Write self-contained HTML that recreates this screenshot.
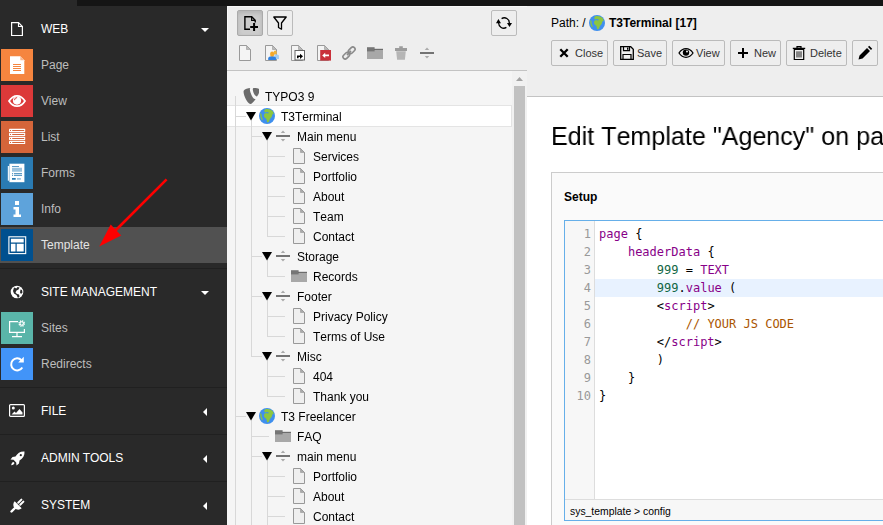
<!DOCTYPE html>
<html><head><meta charset="utf-8"><title>TYPO3 Template</title>
<style>
*{box-sizing:border-box;margin:0;padding:0}
html,body{width:883px;height:525px;overflow:hidden;background:#fff}
body{position:relative;font-family:"Liberation Sans",sans-serif;font-size:12px;color:#000}
.abs,#side,#tree,#doc,#content{position:absolute}
#top{position:absolute;left:77px;top:0;width:806px;height:6px;background:#151515}
#side{left:0;top:0;width:227px;height:525px;background:#292929;overflow:hidden}
#side .top0{position:absolute;left:77px;top:0;right:0;height:6px;background:#151515}
.gh{position:absolute;left:41px;color:#fff;font-size:12px;line-height:14px;white-space:nowrap}
.mi{position:absolute;left:1px;width:32px;height:32px}
.ml{position:absolute;left:41px;color:#bdbdbd;font-size:12px;line-height:14px;white-space:nowrap}
.sep{position:absolute;left:0;width:227px;height:1px;background:#202020}
.act{position:absolute;left:0;top:227px;width:227px;height:36px;background:#515151}
.gi{position:absolute}
#tree{left:227px;top:6px;width:300px;height:519px;background:#f5f5f5;overflow:hidden}
#tbar{position:absolute;left:227px;top:6px;width:300px;height:64px;background:#eee;box-shadow:inset 1px 1px 0 #f8f8f8}
#tbarb{position:absolute;left:227px;top:70px;width:300px;height:1px;background:#c3c3c3}
.btn{position:absolute;height:26px;border:1px solid #bbb;border-radius:2px;background:#eee;font-size:11px;color:#333;line-height:24px;white-space:nowrap}
.btn.on{background:#ccc;border-color:#aaa;box-shadow:inset 0 2px 4px rgba(0,0,0,.12)}
.btn svg{position:absolute}
.btn span{position:absolute;top:0}
.ln{position:absolute;background:#d8d8d8;display:block}
.ti{position:absolute;display:block}
.tt{position:absolute;font-kerning:none;will-change:transform;font-size:12px;line-height:20px;white-space:nowrap;color:#000}
.sel{position:absolute;left:227px;width:285px;height:22px;background:#fff;border:1px solid #e4e4e4;border-left:0}
#doc{left:527px;top:6px;width:356px;height:90px;background:#eee}
#docb{position:absolute;left:527px;top:96px;width:356px;height:1px;background:#c3c3c3}
#content{left:528px;top:97px;width:355px;height:428px;background:#fff;overflow:hidden}
#h1{position:absolute;font-kerning:none;will-change:transform;left:551px;top:119px;font-size:26px;line-height:34px;white-space:nowrap;color:#000;transform:scaleX(.965);transform-origin:0 0}
#card{position:absolute;left:551px;top:172px;width:400px;height:400px;background:#fafafa;border:1px solid #ccc}
#setup{position:absolute;left:564px;top:190px;font-weight:bold;font-size:12px;line-height:14px}
#ed{position:absolute;left:564px;top:220px;width:400px;height:301px;border:1px solid #66afe9;background:#fff;overflow:hidden}
#gut{position:absolute;left:0;top:0;width:30px;height:278px;background:#f7f7f7;border-right:1px solid #ddd}
#stat{position:absolute;left:0;top:278px;width:400px;height:21px;background:#f7f7f7;border-top:1px solid #ddd;font-size:10.4px;line-height:23px;padding-left:5px;color:#000}
.cl{position:relative;height:18px;font-family:"DejaVu Sans Mono","Liberation Mono",monospace;font-size:12px;line-height:18px}
.cl pre{position:absolute;left:34px;top:0;font:inherit;color:#000}
.cl.hl::before{content:"";position:absolute;left:30px;right:0;top:0;height:18px;background:#e8f2ff}
.gn{position:absolute;left:0;width:26px;text-align:right;color:#999}
#lines{position:absolute;left:0;top:4px;width:400px}
.k{color:#808}.n{color:#164}.c{color:#a50}
</style></head><body>
<div id="side">
 <div class="top0"></div>
 <div class="act"></div>
 <!-- WEB -->
 <svg class="gi" style="left:9px;top:21px" width="16" height="16" viewBox="0 0 16 16"><path d="M2.600 1.600h6.900l3.900 3.900v9h-10.800z" fill="none" stroke="#fff" stroke-width="1.200"/><path d="M9.500 1.600v3.900h3.900" fill="none" stroke="#fff" stroke-width="1.100"/></svg>
 <div class="gh" style="top:22px">WEB</div>
 <svg class="gi" style="left:201px;top:28px" width="8" height="4" viewBox="0 0 8 4"><path d="M0 0h8L4 4z" fill="#fff"/></svg>
 <!-- Page -->
 <svg class="mi" style="top:49px" viewBox="0 0 32 32"><rect width="32" height="32" fill="#f5853f"/><path d="M9 7.300h10.300l4 4V25H9z" fill="#fff"/><path d="M19.300 7.300l4 4h-4z" fill="#f9b78c"/><path d="M12 15h8v.900h-8zM12 17h8v.900h-8zM12 19h8v.900h-8zM12 21h8v.900h-8z" fill="#f5853f"/></svg>
 <div class="ml" style="top:58px">Page</div>
 <!-- View -->
 <svg class="mi" style="top:85px" viewBox="0 0 32 32"><rect width="32" height="32" fill="#dc3939"/><path d="M8 16c2.300-3.700 5-5.200 8-5.200s5.700 1.500 8 5.200c-2.300 3.700-5 5.200-8 5.200S10.300 19.700 8 16z" fill="none" stroke="#fff" stroke-width="1.700"/><circle cx="16" cy="15.600" r="4.100" fill="#fff"/><path d="M13.500 15.200a2.600 2.600 0 0 1 2.600-2.600" fill="none" stroke="#dc3939" stroke-width="1"/></svg>
 <div class="ml" style="top:94px">View</div>
 <!-- List -->
 <svg class="mi" style="top:121px" viewBox="0 0 32 32"><rect width="32" height="32" fill="#d5653a"/><g fill="#fff"><rect x="8" y="7.700" width="16.200" height="3.400" rx=".7"/><rect x="8" y="11.700" width="16.200" height="3.400" rx=".7"/><rect x="8" y="15.700" width="16.200" height="3.400" rx=".7"/><rect x="8" y="19.700" width="16.200" height="3.400" rx=".7"/></g><path d="M11.200 8.900h12v1h-12zM11.200 12.900h12v1h-12zM11.200 16.900h12v1h-12zM11.200 20.900h12v1h-12zM9 8.900h1v1H9zM9 12.900h1v1H9zM9 16.900h1v1H9zM9 20.900h1v1H9z" fill="#d5653a"/></svg>
 <div class="ml" style="top:130px">List</div>
 <!-- Forms -->
 <svg class="mi" style="top:157px" viewBox="0 0 32 32"><rect width="32" height="32" fill="#2a7bb3"/><rect x="6.800" y="9" width="1.400" height="14.700" fill="#fff" opacity=".9"/><rect x="8.400" y="6.700" width="15" height="18.500" fill="#fff"/><path d="M11 8.900h7v.9h-7zM11 16.300h1.100v.9H11zM13 16.300h8v.9h-8zM11 18.200h1.100v.9H11zM13 18.200h8v.9h-8zM11 21.100h3.700v1.700H11z" fill="#2a7bb3"/><path d="M11 10.800h10v3.900H11zM16 21.100h3.900v1.700H16z" fill="#9cc3de"/></svg>
 <div class="ml" style="top:166px">Forms</div>
 <!-- Info -->
 <svg class="mi" style="top:193px" viewBox="0 0 32 32"><rect width="32" height="32" fill="#5ea3db"/><path d="M14 8h4v4h-4zM12.500 14h5.500v7.500h2V24h-7.500v-2.500h2v-5h-2z" fill="#fff"/></svg>
 <div class="ml" style="top:202px">Info</div>
 <!-- Template -->
 <svg class="mi" style="top:229px" viewBox="0 0 32 32"><rect width="32" height="32" fill="#00508f"/><rect x="7.900" y="7.800" width="16.800" height="16.800" fill="none" stroke="#fff" stroke-width="1.100"/><path d="M9.900 9.800h12.800v3.800H9.900zM9.900 14.800h4.600v7.800H9.900zM15.700 14.800h7v7.800h-7z" fill="#fff"/></svg>
 <div class="ml" style="top:238px;color:#e4e4e4">Template</div>
 <div class="sep" style="top:268px"></div>
 <!-- SITE MANAGEMENT -->
 <svg class="gi" style="left:10px;top:285px" width="14" height="14" viewBox="0 0 14 14"><circle cx="7" cy="7" r="6.300" fill="#fff"/><path d="M4 2.500l2.500 1 1-1.500 2 .5-1 2-2 1-1 2 1.500 1.500 2 .5.500 2-1.500 1.500-1.500-3-2.500-1.500-1-2.500zM10.500 4.500l1.500.5.500 2.500-1.500 1.500-1-1.500z" fill="#292929"/></svg>
 <div class="gh" style="top:285px">SITE MANAGEMENT</div>
 <svg class="gi" style="left:201px;top:291px" width="8" height="4" viewBox="0 0 8 4"><path d="M0 0h8L4 4z" fill="#fff"/></svg>
 <!-- Sites -->
 <svg class="mi" style="top:312px" viewBox="0 0 32 32"><rect width="32" height="32" fill="#5ab5a9"/><path d="M17 9.600H8.600v10.800h14.800V17" fill="none" stroke="#fff" stroke-width="1.200"/><path d="M15.400 20.500h1.200v3.500h-1.200zM11 24h10v1.200H11z" fill="#fff"/><circle cx="20.700" cy="11.500" r="2.600" fill="none" stroke="#fff" stroke-width="1.400" stroke-dasharray="1.200 .840"/><circle cx="20.700" cy="11.500" r="1.700" fill="none" stroke="#fff" stroke-width="1.100"/></svg>
 <div class="ml" style="top:321px">Sites</div>
 <!-- Redirects -->
 <svg class="mi" style="top:348px" viewBox="0 0 32 32"><rect width="32" height="32" fill="#4294f8"/><path d="M21.300 19.500a6 6 0 1 1-.8-7.300" fill="none" stroke="#fff" stroke-width="2"/><path d="M22.800 8.800v5.600h-5.600z" fill="#fff"/></svg>
 <div class="ml" style="top:357px">Redirects</div>
 <div class="sep" style="top:387px"></div>
 <!-- FILE -->
 <svg class="gi" style="left:9px;top:404px" width="16" height="13" viewBox="0 0 16 13"><rect x=".600" y=".600" width="14.800" height="11.800" rx="1" fill="none" stroke="#fff" stroke-width="1.200"/><circle cx="4.300" cy="4" r="1.500" fill="#fff"/><path d="M2.500 10.500l3-3 1.500 1.500 3.500-4 3 3.500v2z" fill="#fff"/></svg>
 <div class="gh" style="top:404px">FILE</div>
 <svg class="gi" style="left:203px;top:408px" width="4" height="8" viewBox="0 0 4 8"><path d="M4 0v8L0 4z" fill="#fff"/></svg>
 <div class="sep" style="top:434px"></div>
 <!-- ADMIN TOOLS -->
 <svg class="gi" style="left:10px;top:451px" width="15" height="15" viewBox="0 0 15 15"><path d="M14.500 .5c-4-.3-7 1.500-9 5l-3 .5-2 2.500 3 .3 2.700 2.700.3 3 2.500-2 .5-3c3.500-2 5.300-5 5-9zM3.500 11c-1.300.3-2 1.300-2.300 3.300 2-.3 3-1 3.300-2.300z" fill="#fff"/><circle cx="10.800" cy="4.200" r="1.100" fill="#292929"/></svg>
 <div class="gh" style="top:451px">ADMIN TOOLS</div>
 <svg class="gi" style="left:203px;top:455px" width="4" height="8" viewBox="0 0 4 8"><path d="M4 0v8L0 4z" fill="#fff"/></svg>
 <div class="sep" style="top:481px"></div>
 <!-- SYSTEM -->
 <svg class="gi" style="left:10px;top:498px" width="15" height="15" viewBox="0 0 15 15"><path d="M4.700 3.300l7 7a4.950 4.950 0 0 1-7-7z" fill="#fff"/><path d="M8.200 4.800l3.200-3.200M10.200 6.800l3.200-3.200" stroke="#fff" stroke-width="2" stroke-linecap="round"/><path d="M5 10L1.500 13.500" stroke="#fff" stroke-width="2.400" stroke-linecap="round"/></svg>
 <div class="gh" style="top:498px">SYSTEM</div>
 <svg class="gi" style="left:203px;top:502px" width="4" height="8" viewBox="0 0 4 8"><path d="M4 0v8L0 4z" fill="#fff"/></svg>
 <!-- arrow -->
 <svg class="gi" style="left:0;top:0" width="227" height="525" viewBox="0 0 227 525"><path d="M166.600 179.400L114 232" stroke="#fe0000" stroke-width="2.600" fill="none"/><path d="M99.200 246.600L110.700 224.500L121.200 235.600z" fill="#fe0000"/></svg>
</div>

<div id="tree"></div>
<div id="top"></div>
<div id="tbar"></div><div id="tbarb"></div>
<!-- tree toolbar buttons -->
<div class="btn on" style="left:237px;top:10px;width:26px"><svg style="left:4px;top:4px" width="16" height="16" viewBox="0 0 16 16"><path d="M8 14.200H2.900V1.800h6.800l3.500 3.500v2.200" fill="none" stroke="#000" stroke-width="1.400"/><path d="M9.600 2v3.400h3.400" fill="none" stroke="#000" stroke-width="1.100"/><path d="M11.100 8.100h2v2.900h2.900v2h-2.900v2.900h-2v-2.900H8.200v-2h2.900z" fill="#000"/></svg></div>
<div class="btn" style="left:267px;top:10px;width:26px"><svg style="left:4px;top:4px" width="16" height="16" viewBox="0 0 16 16"><path d="M1.800 2h12.400L9.500 8v6.200L6.500 12.500V8z" fill="none" stroke="#000" stroke-width="1.300" stroke-linejoin="round"/></svg></div>
<div class="btn" style="left:491px;top:10px;width:26px"><svg style="left:4px;top:4px" width="16" height="16" viewBox="0 0 16 16"><path d="M5.600 3.600A5 5 0 0 1 13.300 8.200M2.700 7.800A5 5 0 0 0 10.400 12.400" fill="none" stroke="#000" stroke-width="1.300"/><path d="M0 8.300h5L2.400 4zM11 7.900h5L13.500 12.100z" fill="#000"/></svg></div>
<!-- tree toolbar row 2 icons -->
<svg class="ti" style="left:237px;top:45px" width="16" height="16" viewBox="0 0 16 16"><path d="M2.500 .5h7l4 4v11h-11z" fill="#f4f4f4" stroke="#999"/><path d="M9.500 .5v4h4z" fill="#bbb" stroke="#999" stroke-width=".6"/></svg>
<svg class="ti" style="left:263px;top:45px" width="16" height="16" viewBox="0 0 16 16"><path d="M2.500 .5h7l4 4v11h-11z" fill="#f4f4f4" stroke="#999"/><path d="M9.500 .5v4h4z" fill="#bbb" stroke="#999" stroke-width=".6"/><rect x="10.700" y="5.500" width="3" height="4.200" rx="1.500" fill="#f2b43a"/><path d="M11.500 9.400h2.700c1 0 1.800.8 1.800 1.800v2.800h-4.500z" fill="#a3cdf2"/><rect x="7.200" y="6.600" width="3.900" height="5.400" rx="1.900" fill="#f5a828"/><path d="M5.200 15v-1.400c0-1.200.9-2 2-2h3.800c1.100 0 2 .8 2 2V15z" fill="#2f80e0"/></svg>
<svg class="ti" style="left:289px;top:45px" width="16" height="16" viewBox="0 0 16 16"><path d="M2.500 .5h7l4 4v11h-11z" fill="#f4f4f4" stroke="#999"/><path d="M9.500 .5v4h4z" fill="#bbb" stroke="#999" stroke-width=".6"/><rect x="6" y="5.500" width="9.500" height="9.500" fill="#fff" stroke="#666"/><path d="M8 13.300v-2.800h3V8.700l3 2.600-3 2.600v-1.800H9.600v1.200z" fill="#000"/></svg>
<svg class="ti" style="left:315px;top:45px" width="16" height="16" viewBox="0 0 16 16"><path d="M2.500 .5h7l4 4v11h-11z" fill="#f4f4f4" stroke="#999"/><path d="M9.500 .5v4h4z" fill="#bbb" stroke="#999" stroke-width=".6"/><rect x="5.200" y="5" width="10.800" height="10.600" fill="#c9303a"/><path d="M7.200 10.400l3-2.700v1.800h3.800v1.800h-3.800v1.800z" fill="#fff"/></svg>
<svg class="ti" style="left:341px;top:45px" width="16" height="16" viewBox="0 0 16 16"><g fill="none" stroke="#8a8a8a" stroke-width="1.600"><rect x="6.900" y="3.100" width="7.600" height="4.400" rx="2.200" transform="rotate(-45 10.700 5.300)"/><rect x="1.500" y="8.500" width="7.600" height="4.400" rx="2.200" transform="rotate(-45 5.300 10.700)"/></g><path d="M6 10l4-4" stroke="#8a8a8a" stroke-width="1.800"/></svg>
<svg class="ti" style="left:367px;top:45px" width="16" height="16" viewBox="0 0 16 16"><path d="M0 4h16v10H0z" fill="#a8a8a8"/><path d="M0 2.200h7.600v4.200H0z" fill="#757575"/><path d="M7 3.800h9v1.100H7z" fill="#666"/></svg>
<svg class="ti" style="left:393px;top:45px" width="16" height="16" viewBox="0 0 16 16"><path d="M6.200 1.300h3.600v1.800H14v2.800H2V3.100h4.200z" fill="#9c9c9c"/><path d="M3.200 6.200h9.600l-.9 8.600H4.100z" fill="#b5b5b5"/></svg>
<svg class="ti" style="left:419px;top:45px" width="16" height="16" viewBox="0 0 16 16"><path d="M1 7h14v2H1z" fill="#737373"/><path d="M8 2.600l2.200 2.400H5.800zM8 13.400l2.200-2.400H5.800z" fill="#aaa"/></svg>

<!-- scrollbar -->
<div class="abs" style="left:512px;top:71px;width:15px;height:454px;background:#f1f1f1"></div>
<div class="abs" style="left:514px;top:86px;width:11px;height:439px;background:#c1c1c1"></div>
<svg class="ti" style="left:516px;top:77px" width="7" height="4" viewBox="0 0 7 4"><path d="M0 4h7L3.500 0z" fill="#a3a3a3"/></svg>
<div class="sel" style="top:105px"></div>
<i class="ln" style="left:235px;top:96px;width:1px;height:429px"></i>
<i class="ln" style="left:235px;top:116px;width:11px;height:1px"></i>
<i class="ln" style="left:251px;top:120px;width:1px;height:237px"></i>
<i class="ln" style="left:251px;top:136px;width:11px;height:1px"></i>
<i class="ln" style="left:267px;top:140px;width:1px;height:97px"></i>
<i class="ln" style="left:267px;top:156px;width:18px;height:1px"></i>
<i class="ln" style="left:267px;top:176px;width:18px;height:1px"></i>
<i class="ln" style="left:267px;top:196px;width:18px;height:1px"></i>
<i class="ln" style="left:267px;top:216px;width:18px;height:1px"></i>
<i class="ln" style="left:267px;top:236px;width:18px;height:1px"></i>
<i class="ln" style="left:251px;top:256px;width:11px;height:1px"></i>
<i class="ln" style="left:267px;top:260px;width:1px;height:17px"></i>
<i class="ln" style="left:267px;top:276px;width:18px;height:1px"></i>
<i class="ln" style="left:251px;top:296px;width:11px;height:1px"></i>
<i class="ln" style="left:267px;top:300px;width:1px;height:37px"></i>
<i class="ln" style="left:267px;top:316px;width:18px;height:1px"></i>
<i class="ln" style="left:267px;top:336px;width:18px;height:1px"></i>
<i class="ln" style="left:251px;top:356px;width:11px;height:1px"></i>
<i class="ln" style="left:267px;top:360px;width:1px;height:37px"></i>
<i class="ln" style="left:267px;top:376px;width:18px;height:1px"></i>
<i class="ln" style="left:267px;top:396px;width:18px;height:1px"></i>
<i class="ln" style="left:235px;top:416px;width:11px;height:1px"></i>
<i class="ln" style="left:251px;top:420px;width:1px;height:105px"></i>
<i class="ln" style="left:251px;top:436px;width:18px;height:1px"></i>
<i class="ln" style="left:251px;top:456px;width:11px;height:1px"></i>
<i class="ln" style="left:267px;top:460px;width:1px;height:65px"></i>
<i class="ln" style="left:267px;top:476px;width:18px;height:1px"></i>
<i class="ln" style="left:267px;top:496px;width:18px;height:1px"></i>
<i class="ln" style="left:267px;top:516px;width:18px;height:1px"></i>
<svg class="ti" style="left:243px;top:88px" width="16" height="16" viewBox="0 0 16 16"><path d="M12.600 10.900c-.24.070-.430.100-.680.100-2.050 0-5.060-7.160-5.060-9.540 0-.880.210-1.170.500-1.420C4.850.330 1.840 1.250 .880 2.420c-.210.290-.330.750-.330 1.340C.550 7.480 4.520 15.920 7.320 15.920c1.300 0 3.480-2.130 5.280-5.020M11.290 0c2.590 0 5.180.420 5.180 1.880 0 2.970-1.880 6.560-2.840 6.560-1.710 0-3.840-4.760-3.840-7.140C9.790.210 10.210 0 11.290 0" fill="#6b6b6b"/></svg>
<span class="tt" style="left:265px;top:87px">TYPO3 9</span>
<svg class="ti" style="left:246px;top:112px" width="10" height="9" viewBox="0 0 10 9"><path d="M0 0h10L5 8.500z" fill="#000"/></svg>
<svg class="ti" style="left:259px;top:108px" width="16" height="16" viewBox="0 0 16 16"><circle cx="8" cy="8" r="8" fill="#3f8fee"/><path d="M6.200 1.200C8.500.500 11.800 1 13.600 3L14.800 5.400 13.400 6.400l-.600 2.400-2 2.400-.800 2.600-1.800.600-.800-3.400-2.200-2-.200-2.400L6.600 5l2.600.400.600-.800L8 4l-1.800.400L5 3zM1.600 4.600l1 1.800v2.400l1.200 2.800-.600 1C1.400 10.600.800 7.400 1.600 4.600z" fill="#8cc63f"/></svg>
<span class="tt" style="left:281px;top:107px">T3Terminal</span>
<svg class="ti" style="left:262px;top:132px" width="10" height="9" viewBox="0 0 10 9"><path d="M0 0h10L5 8.500z" fill="#000"/></svg>
<svg class="ti" style="left:275px;top:128px" width="16" height="16" viewBox="0 0 16 16"><path d="M1 7h14v2H1z" fill="#737373"/><path d="M8 2.6l2.2 2.4H5.8zM8 13.4l2.2-2.4H5.8z" fill="#aaa"/></svg>
<span class="tt" style="left:297px;top:127px">Main menu</span>
<svg class="ti" style="left:291px;top:148px" width="16" height="16" viewBox="0 0 16 16"><path d="M2.5 .5h7l4 4v11h-11z" fill="#efefef" stroke="#999"/><path d="M9.5 .5v4h4z" fill="#aaa" stroke="#999" stroke-width=".6"/></svg>
<span class="tt" style="left:313px;top:147px">Services</span>
<svg class="ti" style="left:291px;top:168px" width="16" height="16" viewBox="0 0 16 16"><path d="M2.5 .5h7l4 4v11h-11z" fill="#efefef" stroke="#999"/><path d="M9.5 .5v4h4z" fill="#aaa" stroke="#999" stroke-width=".6"/></svg>
<span class="tt" style="left:313px;top:167px">Portfolio</span>
<svg class="ti" style="left:291px;top:188px" width="16" height="16" viewBox="0 0 16 16"><path d="M2.5 .5h7l4 4v11h-11z" fill="#efefef" stroke="#999"/><path d="M9.5 .5v4h4z" fill="#aaa" stroke="#999" stroke-width=".6"/></svg>
<span class="tt" style="left:313px;top:187px">About</span>
<svg class="ti" style="left:291px;top:208px" width="16" height="16" viewBox="0 0 16 16"><path d="M2.5 .5h7l4 4v11h-11z" fill="#efefef" stroke="#999"/><path d="M9.5 .5v4h4z" fill="#aaa" stroke="#999" stroke-width=".6"/></svg>
<span class="tt" style="left:313px;top:207px">Team</span>
<svg class="ti" style="left:291px;top:228px" width="16" height="16" viewBox="0 0 16 16"><path d="M2.5 .5h7l4 4v11h-11z" fill="#efefef" stroke="#999"/><path d="M9.5 .5v4h4z" fill="#aaa" stroke="#999" stroke-width=".6"/></svg>
<span class="tt" style="left:313px;top:227px">Contact</span>
<svg class="ti" style="left:262px;top:252px" width="10" height="9" viewBox="0 0 10 9"><path d="M0 0h10L5 8.500z" fill="#000"/></svg>
<svg class="ti" style="left:275px;top:248px" width="16" height="16" viewBox="0 0 16 16"><path d="M1 7h14v2H1z" fill="#737373"/><path d="M8 2.6l2.2 2.4H5.8zM8 13.4l2.2-2.4H5.8z" fill="#aaa"/></svg>
<span class="tt" style="left:297px;top:247px">Storage</span>
<svg class="ti" style="left:291px;top:268px" width="16" height="16" viewBox="0 0 16 16"><path d="M0 4h16v10H0z" fill="#a8a8a8"/><path d="M0 2.200h7.600v4.200H0z" fill="#757575"/><path d="M7 3.800h9v1.100H7z" fill="#666"/></svg>
<span class="tt" style="left:313px;top:267px">Records</span>
<svg class="ti" style="left:262px;top:292px" width="10" height="9" viewBox="0 0 10 9"><path d="M0 0h10L5 8.500z" fill="#000"/></svg>
<svg class="ti" style="left:275px;top:288px" width="16" height="16" viewBox="0 0 16 16"><path d="M1 7h14v2H1z" fill="#737373"/><path d="M8 2.6l2.2 2.4H5.8zM8 13.4l2.2-2.4H5.8z" fill="#aaa"/></svg>
<span class="tt" style="left:297px;top:287px">Footer</span>
<svg class="ti" style="left:291px;top:308px" width="16" height="16" viewBox="0 0 16 16"><path d="M2.5 .5h7l4 4v11h-11z" fill="#efefef" stroke="#999"/><path d="M9.5 .5v4h4z" fill="#aaa" stroke="#999" stroke-width=".6"/></svg>
<span class="tt" style="left:313px;top:307px">Privacy Policy</span>
<svg class="ti" style="left:291px;top:328px" width="16" height="16" viewBox="0 0 16 16"><path d="M2.5 .5h7l4 4v11h-11z" fill="#efefef" stroke="#999"/><path d="M9.5 .5v4h4z" fill="#aaa" stroke="#999" stroke-width=".6"/></svg>
<span class="tt" style="left:313px;top:327px">Terms of Use</span>
<svg class="ti" style="left:262px;top:352px" width="10" height="9" viewBox="0 0 10 9"><path d="M0 0h10L5 8.500z" fill="#000"/></svg>
<svg class="ti" style="left:275px;top:348px" width="16" height="16" viewBox="0 0 16 16"><path d="M1 7h14v2H1z" fill="#737373"/><path d="M8 2.6l2.2 2.4H5.8zM8 13.4l2.2-2.4H5.8z" fill="#aaa"/></svg>
<span class="tt" style="left:297px;top:347px">Misc</span>
<svg class="ti" style="left:291px;top:368px" width="16" height="16" viewBox="0 0 16 16"><path d="M2.5 .5h7l4 4v11h-11z" fill="#efefef" stroke="#999"/><path d="M9.5 .5v4h4z" fill="#aaa" stroke="#999" stroke-width=".6"/></svg>
<span class="tt" style="left:313px;top:367px">404</span>
<svg class="ti" style="left:291px;top:388px" width="16" height="16" viewBox="0 0 16 16"><path d="M2.5 .5h7l4 4v11h-11z" fill="#efefef" stroke="#999"/><path d="M9.5 .5v4h4z" fill="#aaa" stroke="#999" stroke-width=".6"/></svg>
<span class="tt" style="left:313px;top:387px">Thank you</span>
<svg class="ti" style="left:246px;top:412px" width="10" height="9" viewBox="0 0 10 9"><path d="M0 0h10L5 8.500z" fill="#000"/></svg>
<svg class="ti" style="left:259px;top:408px" width="16" height="16" viewBox="0 0 16 16"><circle cx="8" cy="8" r="8" fill="#3f8fee"/><path d="M6.200 1.200C8.500.500 11.800 1 13.600 3L14.800 5.400 13.400 6.400l-.600 2.400-2 2.400-.800 2.600-1.800.600-.800-3.400-2.200-2-.200-2.400L6.600 5l2.600.400.600-.800L8 4l-1.800.400L5 3zM1.600 4.600l1 1.800v2.400l1.200 2.800-.600 1C1.400 10.600.800 7.400 1.600 4.600z" fill="#8cc63f"/></svg>
<span class="tt" style="left:281px;top:407px">T3 Freelancer</span>
<svg class="ti" style="left:275px;top:428px" width="16" height="16" viewBox="0 0 16 16"><path d="M0 4h16v10H0z" fill="#a8a8a8"/><path d="M0 2.200h7.600v4.200H0z" fill="#757575"/><path d="M7 3.800h9v1.100H7z" fill="#666"/></svg>
<span class="tt" style="left:297px;top:427px">FAQ</span>
<svg class="ti" style="left:262px;top:452px" width="10" height="9" viewBox="0 0 10 9"><path d="M0 0h10L5 8.500z" fill="#000"/></svg>
<svg class="ti" style="left:275px;top:448px" width="16" height="16" viewBox="0 0 16 16"><path d="M1 7h14v2H1z" fill="#737373"/><path d="M8 2.6l2.2 2.4H5.8zM8 13.4l2.2-2.4H5.8z" fill="#aaa"/></svg>
<span class="tt" style="left:297px;top:447px">main menu</span>
<svg class="ti" style="left:291px;top:468px" width="16" height="16" viewBox="0 0 16 16"><path d="M2.5 .5h7l4 4v11h-11z" fill="#efefef" stroke="#999"/><path d="M9.5 .5v4h4z" fill="#aaa" stroke="#999" stroke-width=".6"/></svg>
<span class="tt" style="left:313px;top:467px">Portfolio</span>
<svg class="ti" style="left:291px;top:488px" width="16" height="16" viewBox="0 0 16 16"><path d="M2.5 .5h7l4 4v11h-11z" fill="#efefef" stroke="#999"/><path d="M9.5 .5v4h4z" fill="#aaa" stroke="#999" stroke-width=".6"/></svg>
<span class="tt" style="left:313px;top:487px">About</span>
<svg class="ti" style="left:291px;top:508px" width="16" height="16" viewBox="0 0 16 16"><path d="M2.5 .5h7l4 4v11h-11z" fill="#efefef" stroke="#999"/><path d="M9.5 .5v4h4z" fill="#aaa" stroke="#999" stroke-width=".6"/></svg>
<span class="tt" style="left:313px;top:507px">Contact</span>

<div id="doc"></div><div id="docb"></div>
<div class="abs" style="left:551px;top:16px;font-size:12px;line-height:14px;white-space:nowrap">Path: /</div>
<svg class="ti" style="left:589px;top:15px" width="16" height="16" viewBox="0 0 16 16"><circle cx="8" cy="8" r="8" fill="#3f8fee"/><path d="M6.200 1.200C8.500.500 11.800 1 13.600 3L14.800 5.400 13.400 6.400l-.600 2.400-2 2.400-.800 2.600-1.800.600-.800-3.400-2.200-2-.200-2.400L6.600 5l2.600.400.600-.800L8 4l-1.800.400L5 3zM1.600 4.600l1 1.800v2.400l1.200 2.800-.600 1C1.400 10.600.800 7.400 1.600 4.600z" fill="#8cc63f"/></svg>
<div class="abs" style="left:609px;top:16px;font-size:12px;line-height:14px;font-weight:bold;white-space:nowrap">T3Terminal [17]</div>

<div class="btn" style="left:551px;top:40px;width:57px"><svg style="left:7px;top:6.500px" width="10" height="10" viewBox="0 0 10 10"><path d="M1.300 1.300l7.400 7.400M8.700 1.300l-7.400 7.400" stroke="#000" stroke-width="2.300"/></svg><span style="left:23px">Close</span></div>
<div class="btn" style="left:613px;top:40px;width:54px"><svg style="left:5px;top:4px" width="16" height="16" viewBox="0 0 16 16"><path d="M1.700 1.700h10l2.600 2.600v10H1.700z" fill="none" stroke="#000" stroke-width="1.300"/><path d="M4.500 1.700v4h6v-4M4 14.300V9.500h8v4.800" fill="none" stroke="#000" stroke-width="1.200"/><path d="M8 2.500h1.400v2.300H8z" fill="#000"/></svg><span style="left:23px">Save</span></div>
<div class="btn" style="left:672px;top:40px;width:53px"><svg style="left:5px;top:4px" width="16" height="16" viewBox="0 0 16 16"><path d="M1 8c2-3 4.300-4.300 7-4.300S13 5 15 8c-2 3-4.300 4.300-7 4.300S3 11 1 8z" fill="none" stroke="#000" stroke-width="1.300"/><circle cx="8" cy="7.600" r="3.200" fill="#000"/><circle cx="9" cy="6.400" r="1" fill="#eee"/></svg><span style="left:23px">View</span></div>
<div class="btn" style="left:730px;top:40px;width:51px"><svg style="left:7px;top:7px" width="10" height="10" viewBox="0 0 10 10"><path d="M5 0v10M0 5h10" stroke="#000" stroke-width="2"/></svg><span style="left:23px">New</span></div>
<div class="btn" style="left:786px;top:40px;width:61px"><svg style="left:4px;top:4px" width="16" height="16" viewBox="0 0 16 16"><path d="M3.300 4.300h9.400v10.200H3.300z" fill="none" stroke="#000" stroke-width="1.200"/><path d="M1.800 3.400h12.400M6 3.400V1.700h4v1.700" fill="none" stroke="#000" stroke-width="1.200"/><path d="M6 6.300v6.200M8 6.300v6.200M10 6.300v6.200" stroke="#000" stroke-width=".9"/></svg><span style="left:23px">Delete</span></div>
<div class="btn" style="left:852px;top:40px;width:26px"><svg style="left:4px;top:4px" width="16" height="16" viewBox="0 0 16 16"><path d="M1.500 14.500l1-4 7.500-7.500 3 3-7.500 7.500zM11 2l1.200-1.200 3 3L14 5z" fill="#000"/></svg></div>

<div id="content"></div>
<div id="h1">Edit Template "Agency" on page "T3Terminal"</div>
<div id="card"></div>
<div id="setup">Setup</div>
<div id="ed"><div id="gut"></div><div id="lines">
<div class="cl"><span class="gn">1</span><pre><span class="k">page</span> {</pre></div>
<div class="cl"><span class="gn">2</span><pre>    <span class="k">headerData</span> {</pre></div>
<div class="cl"><span class="gn">3</span><pre>        <span class="n">999</span> = <span class="k">TEXT</span></pre></div>
<div class="cl hl"><span class="gn">4</span><pre>        <span class="n">999</span>.<span class="k">value</span> (</pre></div>
<div class="cl"><span class="gn">5</span><pre>        &lt;<span class="k">script</span>&gt;</pre></div>
<div class="cl"><span class="gn">6</span><pre>            <span class="c">// YOUR JS CODE</span></pre></div>
<div class="cl"><span class="gn">7</span><pre>        &lt;/<span class="k">script</span>&gt;</pre></div>
<div class="cl"><span class="gn">8</span><pre>        )</pre></div>
<div class="cl"><span class="gn">9</span><pre>    }</pre></div>
<div class="cl"><span class="gn">10</span><pre>}</pre></div>

</div><div id="stat">sys_template &gt; config</div></div>
</body></html>
